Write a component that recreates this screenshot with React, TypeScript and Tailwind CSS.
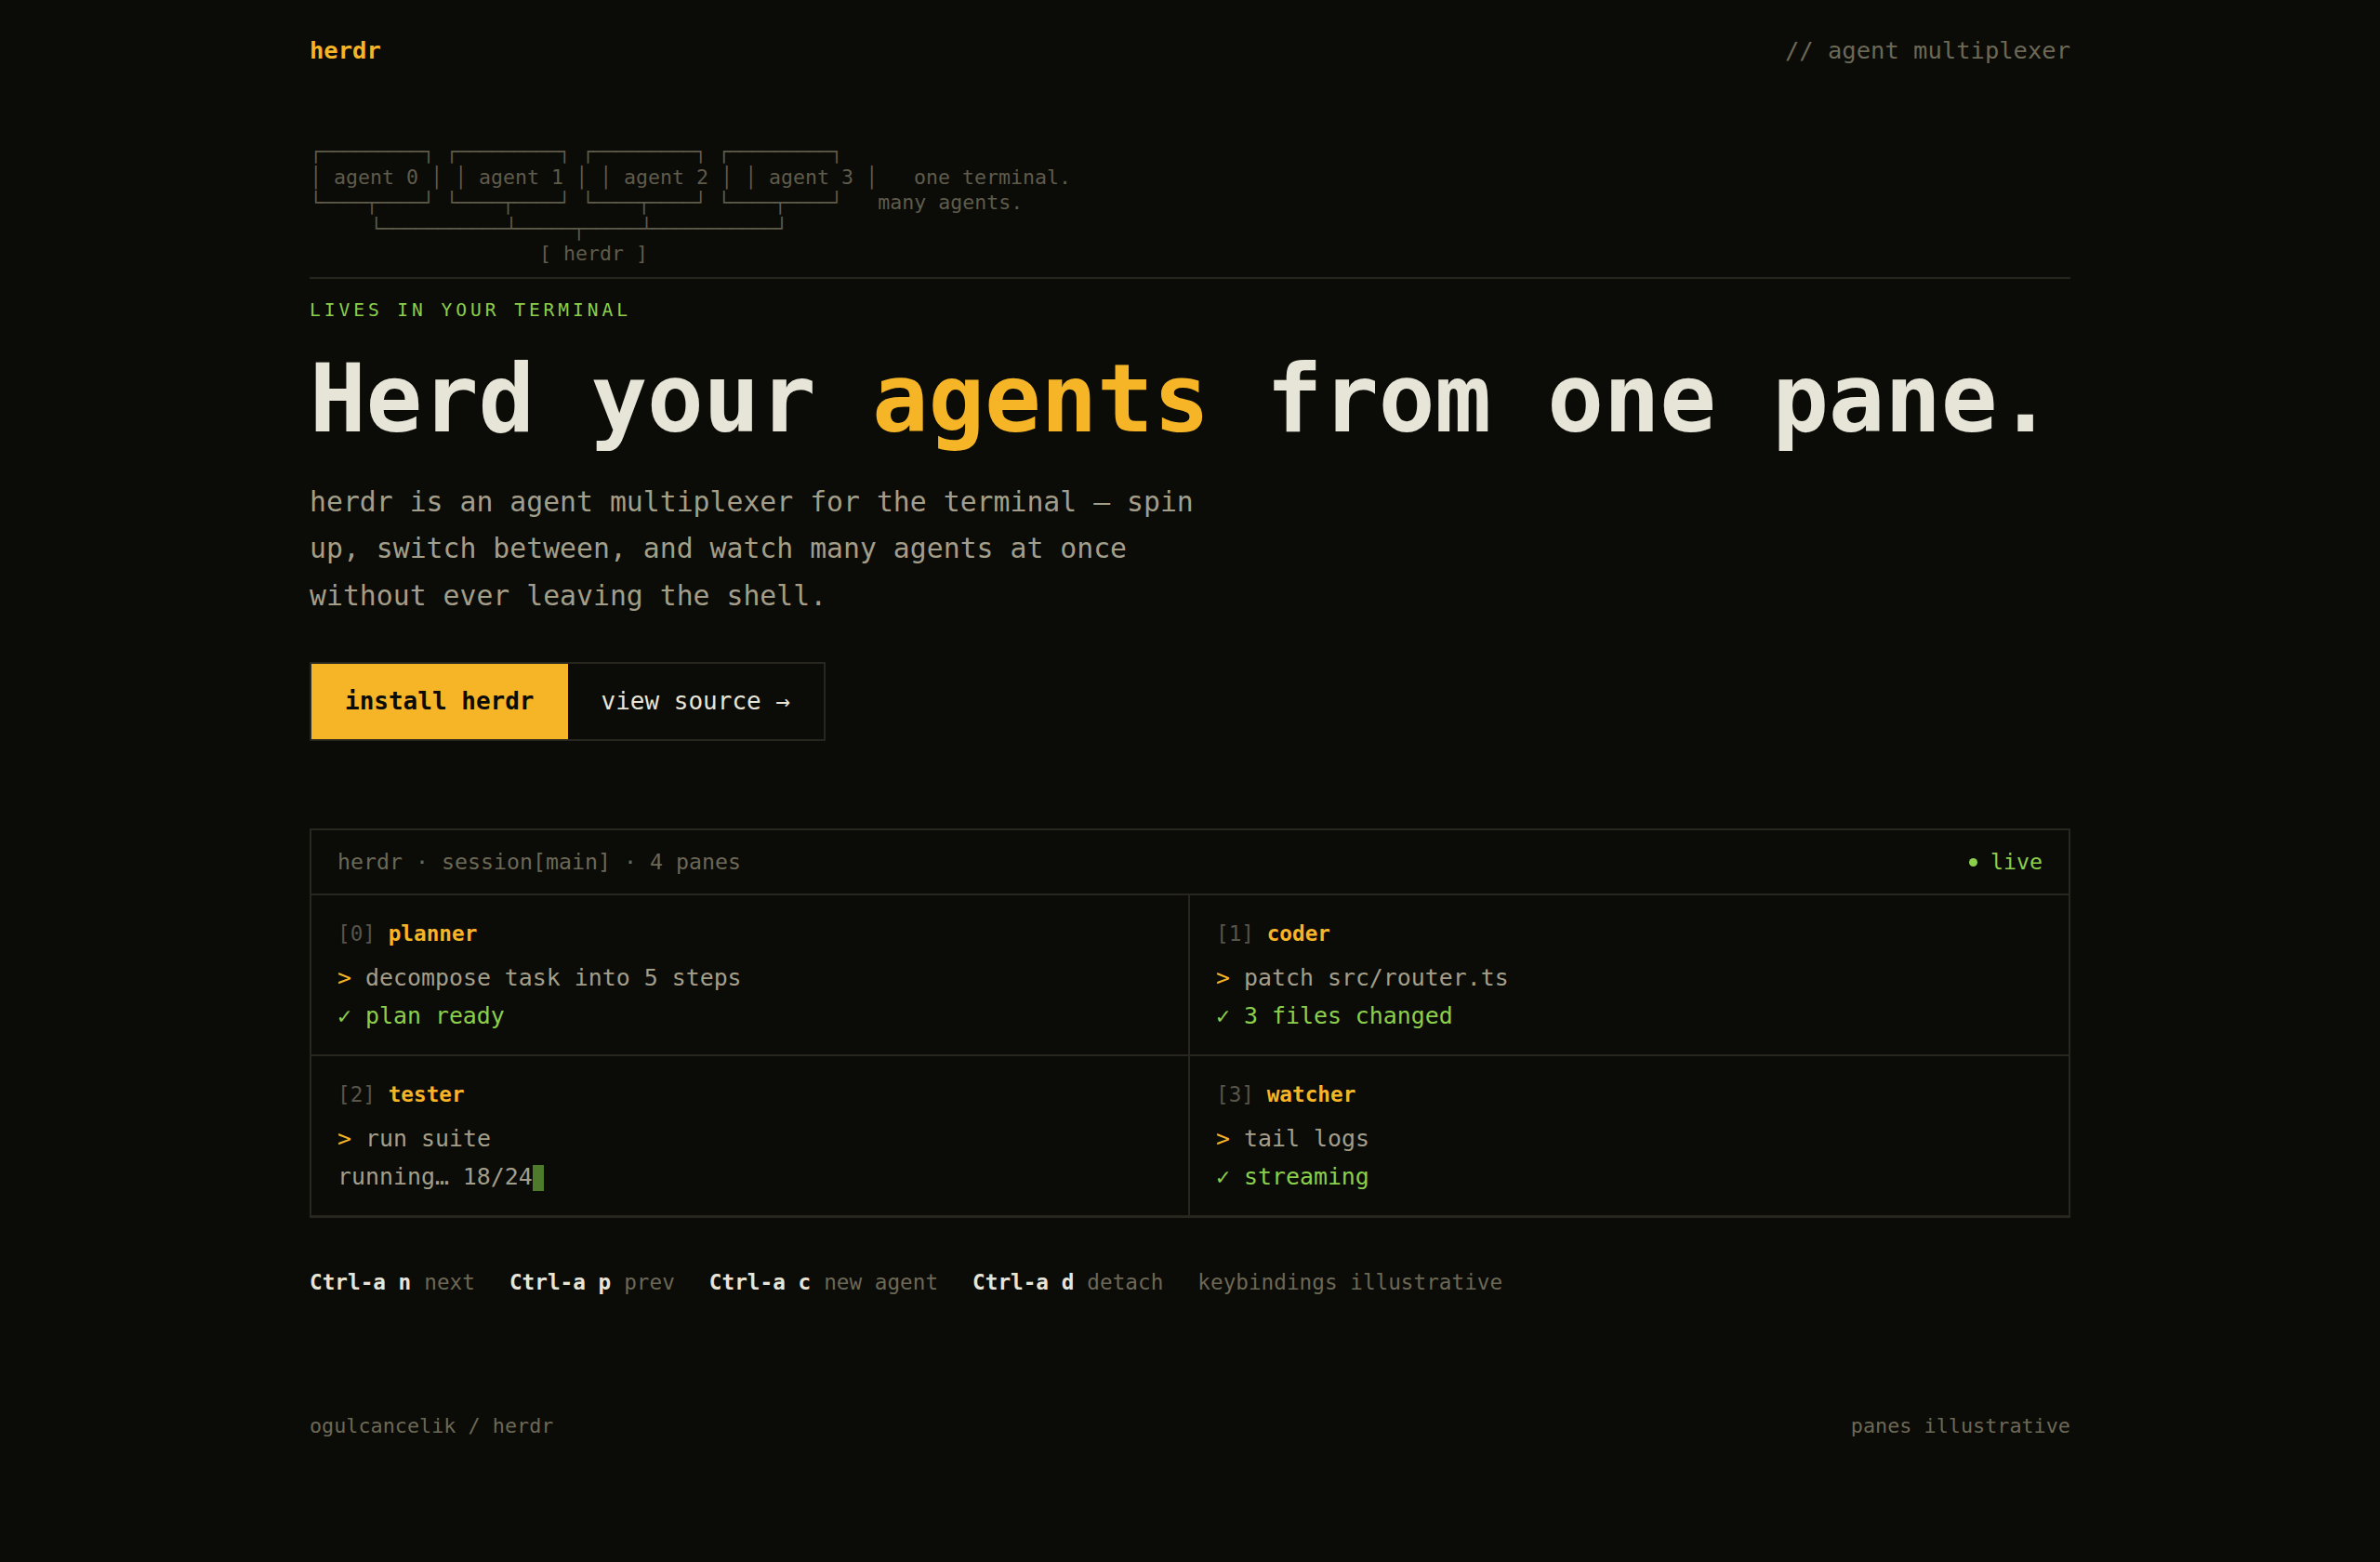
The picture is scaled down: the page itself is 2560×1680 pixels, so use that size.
import type { ReactNode } from 'react';

const mono = { fontFamily: '"DejaVu Sans Mono", "Liberation Mono", monospace' };

// box-drawing runs are a touch narrower than the text around them
function B({ children }: { children: ReactNode }) {
  return <span className="tracking-[-0.88px]">{children}</span>;
}

function Diagram() {
  const box = '┌─────────┐';
  const bot = '└────┬────┘';
  return (
    <pre className="text-[21.6px] leading-[27.5px] text-[#5f5b4b]" style={mono}>
      <B>{box}</B> <B>{box}</B> <B>{box}</B> <B>{box}</B>
      {'\n'}
      {'│ agent 0 │ │ agent 1 │ │ agent 2 │ │ agent 3 │   one terminal.'}
      {'\n'}
      <B>{bot}</B> <B>{bot}</B> <B>{bot}</B> <B>{bot}</B>
      {'   many agents.'}
      {'\n'}
      {'     '}
      <B>{'└───────────┴─────┬─────┴───────────┘'}</B>
      {'\n'}
      {'                   [ herdr ]'}
    </pre>
  );
}

interface PaneProps {
  idx: number;
  name: string;
  cmd: string;
  result: ReactNode;
  className?: string;
}

function Pane({ idx, name, cmd, result, className = '' }: PaneProps) {
  return (
    <div className={`px-[28px] pt-[24px] pb-[21px] ${className}`}>
      <div className="text-[22.7px] leading-[34px] mb-[10px]">
        <span className="text-[#57544a]">[{idx}]</span>{' '}
        <span className="font-bold text-[#f5b526]">{name}</span>
      </div>
      <div className="text-[24.9px] leading-[41px]">
        <div className="text-[#a39e89]">
          <span className="text-[#f5b526]">&gt;</span> {cmd}
        </div>
        <div>{result}</div>
      </div>
    </div>
  );
}

function Key({ k, label }: { k: string; label: string }) {
  return (
    <div className="flex items-baseline">
      <span className="font-bold text-[#e7e5d8]">{k}</span>
      <span className="ml-[14px] text-[#6c6856]">{label}</span>
    </div>
  );
}

export default function App() {
  return (
    <div className="min-h-screen bg-[#0b0b07] text-[#e7e5d8]" style={mono}>
      <div className="mx-auto max-w-[1894px] pb-[120px]">
        <header className="flex items-center justify-between pt-[35px] text-[25.5px] leading-[38px]">
          <span className="font-bold text-[#f5b526]">herdr</span>
          <span className="text-[#6c6856]">// agent multiplexer</span>
        </header>

        <div className="mt-[76px] border-b-2 border-[#25251d] pb-[11px]">
          <Diagram />
        </div>

        <div className="mt-[19px] text-[19.6px] leading-[30px] tracking-[3.93px] text-[#8ccf4b]">
          LIVES IN YOUR TERMINAL
        </div>

        <h1 className="mt-[25px] text-[101px] leading-[110px] font-bold tracking-[-0.3px] text-[#e7e5d8]">
          Herd your <span className="text-[#f5b526]">agents</span> from one pane.
        </h1>

        <p className="mt-[31px] max-w-[990px] text-[29.8px] leading-[50.6px] text-[#a39e89]">
          herdr is an agent multiplexer for the terminal — spin up, switch between, and watch many agents at
          once without ever leaving the shell.
        </p>

        <div className="mt-[46px] flex w-fit border-2 border-[#27271f] text-[26px]">
          <button className="flex h-[81px] items-center bg-[#f5b526] px-[36px] font-semibold text-[#0b0b07]">
            install herdr
          </button>
          <button className="flex h-[81px] items-center px-[36px] text-[#e7e5d8]">view source →</button>
        </div>

        <section className="mt-[94px] border-2 border-b-[3px] border-[#27271f]">
          <div className="flex h-[70px] items-center justify-between border-b-2 border-[#27271f] px-[28px] text-[23.25px]">
            <span className="text-[#6c6856]">herdr · session[main] · 4 panes</span>
            <span className="flex items-center text-[#8ccf4b]">
              <span className="mr-[14px] inline-block h-[9px] w-[9px] rounded-full bg-[#8ccf4b]" />
              live
            </span>
          </div>
          <div className="grid grid-cols-2">
            <Pane
              idx={0}
              name="planner"
              cmd="decompose task into 5 steps"
              result={<span className="text-[#8ccf4b]">✓ plan ready</span>}
              className="border-r-2 border-b-2 border-[#27271f]"
            />
            <Pane
              idx={1}
              name="coder"
              cmd="patch src/router.ts"
              result={<span className="text-[#8ccf4b]">✓ 3 files changed</span>}
              className="border-b-2 border-[#27271f]"
            />
            <Pane
              idx={2}
              name="tester"
              cmd="run suite"
              result={
                <span className="text-[#a39e89]">
                  running… 18/24
                  <span className="inline-block h-[28px] w-[12px] bg-[#4e7a2b] align-middle" />
                </span>
              }
              className="border-r-2 border-[#27271f]"
            />
            <Pane
              idx={3}
              name="watcher"
              cmd="tail logs"
              result={<span className="text-[#8ccf4b]">✓ streaming</span>}
            />
          </div>
        </section>

        <div className="mt-[52px] flex items-baseline gap-x-[37px] text-[22.7px] leading-[34px]">
          <Key k="Ctrl-a n" label="next" />
          <Key k="Ctrl-a p" label="prev" />
          <Key k="Ctrl-a c" label="new agent" />
          <Key k="Ctrl-a d" label="detach" />
          <span className="text-[#6c6856]">keybindings illustrative</span>
        </div>

        <footer className="mt-[121px] flex justify-between text-[21.8px] leading-[34px] text-[#6c6856]">
          <span>ogulcancelik / herdr</span>
          <span>panes illustrative</span>
        </footer>
      </div>
    </div>
  );
}
